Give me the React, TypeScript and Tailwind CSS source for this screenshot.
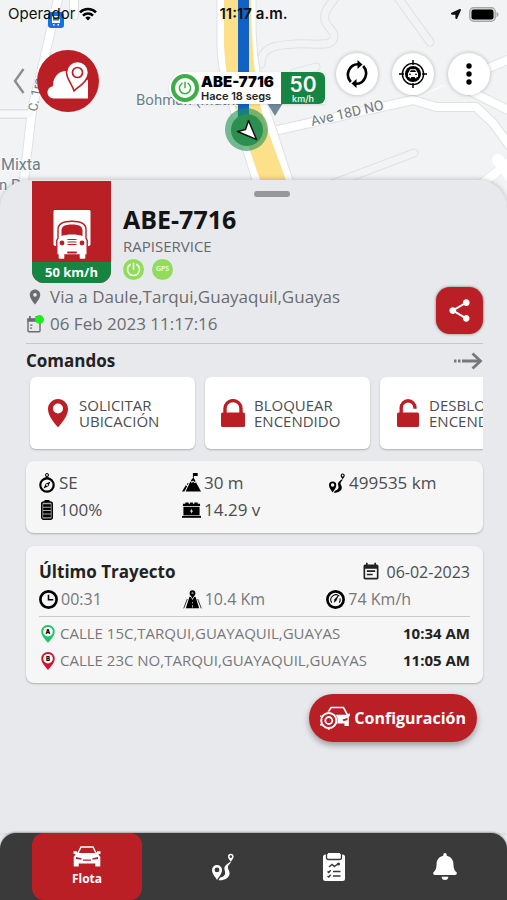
import React, { useState } from 'react';
import { FaBell, FaLocationArrow } from 'react-icons/fa';
import { MdEventNote, MdLocationOn, MdShare } from 'react-icons/md';

type IconProps = { className?: string };

const BackIcon = ({ className }: IconProps) => (
  <svg viewBox="0 0 12 26" className={className} fill="none" stroke="currentColor" strokeWidth="2.4">
    <path d="M10.5 1 2 13l8.500 12" />
  </svg>
);

const WifiIcon = ({ className }: IconProps) => (
  <svg viewBox="0 0 18 14" className={className} fill="none" stroke="currentColor" strokeWidth="2.500">
    <path d="M1 5.300a11.500 11.500 0 0 1 16 0" />
    <path d="M4 8.600a7 7 0 0 1 10 0" />
    <path d="M9 13.500 6.300 10.800a3.900 3.900 0 0 1 5.400 0z" fill="currentColor" stroke="none" />
  </svg>
);

const BatteryIcon = ({ className }: IconProps) => (
  <svg viewBox="0 0 30 15" className={className}>
    <rect x="0.700" y="0.700" width="25.600" height="13.600" rx="4" fill="#d8dad6" stroke="#a5a7a3" strokeWidth="1.200" />
    <rect x="2.500" y="2.500" width="22" height="10" rx="2.200" fill="#000" />
    <path d="M27.500 5c1.400.5 2 1.400 2 2.500s-.6 2-2 2.500z" fill="#a5a7a3" />
  </svg>
);

const LogoIcon = ({ className }: IconProps) => (
  <svg viewBox="0 0 62 62" className={className}>
    <circle cx="31" cy="31" r="31" fill="#bb1f26" />
    <path
      d="M17 48.500c-4 0-6.500-2.800-6.500-6 0-3.300 2.400-5.800 5.500-6.200-.4-7.800 4.500-14.800 12-15.300 3 0 4.500.5 6 1.500L51 30v18.500z"
      fill="#fff"
    />
    <path
      d="M40.500 11.500c-6.300 0-11 4.800-11 10.700 0 6.800 5.500 11.500 7.500 18.600 5.300-5 14.500-9.600 14.500-18.600 0-6-4.800-10.700-11-10.700z"
      fill="#fff"
      stroke="#bb1f26"
      strokeWidth="1.600"
    />
    <circle cx="40.500" cy="22.500" r="5" fill="none" stroke="#bb1f26" strokeWidth="1.700" />
  </svg>
);

const RefreshIcon = ({ className }: IconProps) => (
  <svg viewBox="0 0 24 30" className={className} fill="none" stroke="#000" strokeWidth="2.600">
    <path d="M5.800 23A10 10.500 0 0 1 13 5.200" />
    <path d="M18.200 7A10 10.500 0 0 1 11 24.800" />
    <path d="M12.500 1 17.500 5.600 12.500 10z" fill="#000" stroke="none" />
    <path d="M11.500 29 6.500 24.400 11.500 20z" fill="#000" stroke="none" />
  </svg>
);

const TargetIcon = ({ className }: IconProps) => (
  <svg viewBox="0 0 28 28" className={className}>
    <g fill="none" stroke="#000">
      <circle cx="14" cy="14" r="10.600" strokeWidth="1.400" />
      <path d="M14 0v5M14 23v5M0 14h5M23 14h5" strokeWidth="1.500" />
    </g>
    <circle cx="14" cy="14" r="8" fill="#000" />
    <path d="m9.800 12.300 1.300-3h5.800l1.300 3 .8.700v4h-1.500v1.300h-1.600V17h-3.800v1.300h-1.600V17H9v-4z" fill="#fff" />
    <path d="m11 12 .8-1.700h4.400L17 12zM10 13.700h2v1.100h-2zM16 13.700h2v1.100h-2z" fill="#000" />
  </svg>
);

const DotsIcon = ({ className }: IconProps) => (
  <svg viewBox="0 0 6 24" className={className}>
    <circle cx="3" cy="4" r="2.700" />
    <circle cx="3" cy="12" r="2.700" />
    <circle cx="3" cy="20" r="2.700" />
  </svg>
);

const PowerIcon = ({ className }: IconProps) => (
  <svg viewBox="0 0 14 14" className={className} fill="none" stroke="currentColor" strokeWidth="1.500" strokeLinecap="round">
    <path d="M4 2.300a5.600 5.600 0 1 0 6 0M7 1.200v5.600" />
  </svg>
);

const TruckIcon = ({ className }: IconProps) => (
  <svg viewBox="0 0 40 50" className={className}>
    <path d="M3 0h34c1 0 1.500.6 1.500 1.500V34c0 1-.6 1.800-1.600 2H3.100c-1-.2-1.600-1-1.600-2V1.500C1.500.6 2 0 3 0z" fill="#fff" />
    <path
      d="M7.500 49.500c-1 0-1.500-.6-1.500-1.500v-3H4.800V30.500L6 28V19.500C6 13.500 10.500 11.300 20 11.300s14 2.200 14 8.200V28l1.200 2.500V45H34v3c0 1-.5 1.500-1.500 1.500h-4c-1 0-1.500-.6-1.500-1.500v-3H13v3c0 1-.5 1.500-1.500 1.500z"
      fill="#fff"
      stroke="#bb1f26"
      strokeWidth="1.400"
    />
    <path d="M9.500 26v-5.500c0-4 3-6 10.500-6s10.500 2 10.500 6V26c-3-1-6-1.500-10.500-1.500S12.500 25 9.500 26z" fill="#bb1f26" />
    <circle cx="10" cy="33" r="2.400" fill="#bb1f26" />
    <circle cx="30" cy="33" r="2.400" fill="#bb1f26" />
    <path d="M15.500 29.500h9M15.500 32h9M15.500 34.500h9" stroke="#bb1f26" strokeWidth="1" />
    <rect x="15" y="41.500" width="10" height="2" rx="1" fill="#bb1f26" />
  </svg>
);

const CalendarDotIcon = ({ className }: IconProps) => (
  <svg viewBox="0 0 18 18" className={className}>
    <path d="M2 4.500h12v11.300c0 .6-.4 1-1 1H3c-.6 0-1-.4-1-1V4.500z" fill="none" stroke="#6b6c6e" strokeWidth="1.400" />
    <path d="M1.300 3.200H14v3.600H1.300zM3 1h1.800v3H3zM9.500 1h1.800v3H9.500z" fill="#6b6c6e" />
    <path d="M4 9.500h2.500v1.300H4zM4 12.500h2v1.200H4z" fill="#6b6c6e" />
    <circle cx="13.500" cy="4.500" r="4.400" fill="#19ee19" />
  </svg>
);

const DashedArrowIcon = ({ className }: IconProps) => (
  <svg viewBox="0 0 30 18" className={className} fill="none" stroke="currentColor" strokeWidth="2.800">
    <path d="M1 9h2.500M5 9h2.500M9 9h18" />
    <path d="m19.500 1.500 8 7.500-8 7.500" />
  </svg>
);

const PinIcon = ({ className }: IconProps) => (
  <svg viewBox="0 0 20 28" className={className} fill="currentColor">
    <path
      fillRule="evenodd"
      d="M10 0C4.500 0 0 4.500 0 10c0 7 6 13.500 9 17.300.6.800 1.400.8 2 0C14 23.500 20 17 20 10 20 4.500 15.500 0 10 0zm0 14.500a5 5 0 1 1 0-10 5 5 0 0 1 0 10z"
    />
  </svg>
);

const LockIcon = ({ className }: IconProps) => (
  <svg viewBox="0 0 24 28" className={className}>
    <path d="M4 15V9.500a8 7.900 0 0 1 16 0V15" fill="none" stroke="currentColor" strokeWidth="3.400" />
    <rect x="0" y="13.500" width="24" height="14.500" rx="1.500" fill="currentColor" />
  </svg>
);

const UnlockIcon = ({ className }: IconProps) => (
  <svg viewBox="0 0 22 28" className={className}>
    <path d="M4.200 15V9a6.900 7.300 0 0 1 13.800 0v.8" fill="none" stroke="currentColor" strokeWidth="3.400" />
    <rect x="0" y="13.500" width="22" height="14.500" rx="1.500" fill="currentColor" />
  </svg>
);

const CompassIcon = ({ className }: IconProps) => (
  <svg viewBox="0 0 16 20" className={className}>
    <circle cx="8" cy="12" r="6.700" fill="none" stroke="#000" strokeWidth="2.200" />
    <circle cx="8" cy="2" r="1.500" fill="none" stroke="#000" />
    <path d="M6.500 3.500h3V5h-3z" />
    <path d="m11.500 8.500-2.200 4.800-4.800 2.200 2.200-4.800z" />
    <circle cx="8" cy="12" r="1" fill="#fff" />
  </svg>
);

const BatteryFullIcon = ({ className }: IconProps) => (
  <svg viewBox="0 0 14 20" className={className}>
    <path d="M4.500 0h5v2h-5z" />
    <rect x="1.700" y="2" width="10.600" height="17.300" rx="2" fill="#aaa" stroke="#000" strokeWidth="1.400" />
    <path d="M3.200 4.300h7.600v2.400H3.200zM3.200 7.700h7.600v2.400H3.200zM3.200 11.100h7.600v2.400H3.200zM3.200 14.500h7.600v2.700H3.200z" />
  </svg>
);

const MountainIcon = ({ className }: IconProps) => (
  <svg viewBox="0 0 20 20" className={className}>
    <path d="M0 19.500 4 13l1.500 1L2.500 19.500z" />
    <path d="m3.800 19.500 5-10.500 1.500 1.600 1.400-1.400 1.800 1.600 1.200-1 5.300 9.700z" />
    <path d="m9.300 8 2.700-3.200 2.300 3.700-1 .9-1.700-1.600-1.200 1.400z" />
    <path d="M11.500 5V0h5v3.200h-4V5z" />
    <path d="m5.500 12.500 1-2" stroke="#000" />
  </svg>
);

const CarBatteryIcon = ({ className }: IconProps) => (
  <svg viewBox="0 0 20 18" className={className}>
    <path d="M1 2.500h2.500V1h3.500v1.500h1.500V1h3v1.500H13V1h3.500v1.500H19v2.300H1z" />
    <path d="M1.500 5.600h17v9h-17z" />
    <path d="M0 15.200h20v2H0z" />
    <path d="M10.600 7.500 8.300 10.500h1.500L9.300 13l2.400-3.200h-1.500z" fill="#fff" />
  </svg>
);

// Big pin, winding road, small pin
const RouteIcon = ({ className }: IconProps) => (
  <svg viewBox="0 0 22 27" className={className} fill="currentColor">
    <path
      fillRule="evenodd"
      d="M5 11.500a5 5 0 0 0-5 5c0 3.600 3.200 6.800 5 10 1.800-3.200 5-6.400 5-10a5 5 0 0 0-5-5zm0 7.300a2.400 2.400 0 1 1 0-4.800 2.400 2.400 0 0 1 0 4.800z"
    />
    <path d="M6.500 26.800c6 .4 10.900-2.400 11.100-6.800.1-3-2.100-4.200-1.700-6.500.3-1.700 1.500-2.700 3-4.500l-1-.5c-2.500 2-5.700 3.800-5.500 6.500.2 2.400 1 3.200.6 5.200-.4 2-1.900 3.400-4.800 3.800z" />
    <path
      fillRule="evenodd"
      d="M18.800.3A2.800 2.800 0 0 0 16 3.100c0 2 1.800 3.300 2.800 5.300 1-2 2.800-3.300 2.800-5.300A2.800 2.800 0 0 0 18.800.3zm0 4.100a1.300 1.300 0 1 1 0-2.600 1.300 1.300 0 0 1 0 2.600z"
    />
  </svg>
);

const ClockIcon = ({ className }: IconProps) => (
  <svg viewBox="0 0 18 18" className={className} fill="none" stroke="#000">
    <circle cx="9" cy="9" r="7.700" strokeWidth="2.500" />
    <path d="M9 4.500V9.300h4.500" strokeWidth="1.500" />
  </svg>
);

const RoadIcon = ({ className }: IconProps) => (
  <svg viewBox="0 0 20 20" className={className}>
    <circle cx="10" cy="3.300" r="3" />
    <circle cx="10" cy="3.300" r="1.100" fill="#888" />
    <path d="M8 5.500h4l-2 3.800z" />
    <path d="m6.800 7 1.500.3L10 10.500l1.700-3.200 1.500-.3L17 19.300H3z" />
    <path d="M4.500 9.500.8 19.300M15.500 9.500l3.700 9.800" stroke="#333" strokeWidth="1" />
    <path d="M10 12.500v1.500M10 16v2.500" stroke="#bbb" strokeWidth="0.900" />
  </svg>
);

const GaugeIcon = ({ className }: IconProps) => (
  <svg viewBox="0 0 18 18" className={className} fill="none" stroke="#000">
    <circle cx="9" cy="9" r="7.700" strokeWidth="2.500" />
    <path d="M5.500 12a4.700 4.700 0 0 1 7-6.200M13.300 8a4.700 4.700 0 0 1-.8 4" strokeWidth="1" />
    <path d="m7.800 11.700.5-3L11.500 5.500 9.800 9.800z" fill="#000" strokeWidth="0.500" />
  </svg>
);

const LetterPinIcon = ({ letter, className }: IconProps & { letter: string }) => (
  <svg viewBox="0 0 14 18" className={className}>
    <path d="M7 0C3 0 .3 3 .3 6.700.3 11 4.500 14.500 7 18c2.500-3.500 6.700-7 6.700-11.300C13.700 3 11 0 7 0z" fill="currentColor" />
    <circle cx="7" cy="6.700" r="4.800" fill="#fff" />
    <text x="7" y="8.800" fontSize="6" fontWeight="900" textAnchor="middle" fill="#000" fontFamily="Inter, sans-serif">
      {letter}
    </text>
  </svg>
);

const ConfigCarIcon = ({ className }: IconProps) => (
  <svg viewBox="0 0 30 24" className={className}>
    <path d="M7.500 7.500 11 1.500h12.500l4 7.500" fill="none" stroke="#fff" strokeWidth="1.600" />
    <path d="M14 8.800h13.500L29.800 7v3l-1 1v9h-4.300v-2.500H14z" fill="#fff" />
    <path d="m22.500 13.500 5-1.500v2l-4 1.200z" fill="#bb1f26" />
    <circle cx="8.800" cy="14.500" r="9" fill="#bb1f26" />
    <circle cx="8.800" cy="14.500" r="7.600" fill="none" stroke="#fff" strokeWidth="2" />
    <circle cx="8.800" cy="14.500" r="3.500" fill="none" stroke="#fff" strokeWidth="1.800" />
    <path d="M8.800 22v1.800M1.300 18.500l-1 .8M1 10.500l-.8-.6" stroke="#fff" strokeWidth="2" />
  </svg>
);

const CarIcon = ({ className }: IconProps) => (
  <svg viewBox="0 0 28 21" className={className}>
    <path d="M4.800 7.500 8 1h12l3.200 6.500" fill="none" stroke="#fff" strokeWidth="1.400" />
    <path d="M.5 5.300h3.300l.8 1.700h18.800l.8-1.700h3.300v2.500l-2.200.5 2 2.700v9.500h-5v-3H5.700v3h-5V11l2-2.700-2.200-.5z" fill="#fff" />
    <path d="m3 11 5.500 1.300v1.500L3 13zM25 11l-5.500 1.300v1.500L25 13zM10 13.500h8v1.200h-8z" fill="#bb1f26" />
  </svg>
);

const ReportIcon = ({ className }: IconProps) => (
  <svg viewBox="0 0 22 28" className={className}>
    <rect x="0" y="1.500" width="22" height="26.500" rx="2.500" fill="#fff" />
    <path d="M3.500 1v3.500c0 1.500.8 2 2 2h11c1.200 0 2-.5 2-2V1" fill="#fff" stroke="#3a3a3a" strokeWidth="1.300" />
    <path d="M5 0h12v2.500H5z" fill="#fff" />
    <g fill="none" stroke="#3a3a3a" strokeWidth="1.400">
      <path d="m6 14 3-2.500 2.500 2 4-3.300" />
      <path d="m4.500 18.500 1.200 1 2-2.200M10 18.500h7.500M4.500 23l1.200 1 2-2.200M10 23h7.500" />
    </g>
    <circle cx="15.500" cy="11" r="1.600" fill="#3a3a3a" />
  </svg>
);

const MapBackdrop = () => (
  <svg
    viewBox="0 0 507 220"
    preserveAspectRatio="xMidYMin slice"
    className="absolute inset-x-0 top-0 h-[220px] w-full font-['Roboto',sans-serif]"
  >
    <rect width="507" height="220" fill="#f1f3f4" />
    <g fill="none" stroke="#dfe2e5" strokeLinejoin="round" strokeLinecap="round">
      <g strokeWidth="10">
        <path d="M59-5 44 60 32 110 24 180v45M74-5v20M-5 114h35" />
        <path d="M278 130 413 100l23 7h40l17 16 19 26M484 70l28-12M468 90l44 22" />
        <path d="M512 160 474 190" />
      </g>
      <g strokeWidth="9">
        <path d="M396-5 430 42M337-5c-6 10-14 15-12 25 2 8 12 12 8 20-4 7-22 3-38 4-22 1-34 4-34 20M316 67l-22 6" />
        <path d="m414 153-90 34-40 20" />
      </g>
    </g>
    <g fill="none" stroke="#fff" strokeLinejoin="round" strokeLinecap="round">
      <path d="M59-5 44 60 32 110 24 180v45M74-5v20" strokeWidth="8" />
      <path d="M-5 114h35" strokeWidth="7" stroke="#f8f9fa" />
      <path d="M278 130 413 100l23 7h40l17 16 19 26M484 70l28-12M468 90l44 22" strokeWidth="8" />
      <path d="M512 160 474 190" strokeWidth="9" />
      <path d="m498 160 14 18" strokeWidth="12" />
      <path d="M413 100 444 85" strokeWidth="1" />
      <g strokeWidth="7" stroke="#f1f3f4">
        <path d="M396-5 430 42M337-5c-6 10-14 15-12 25 2 8 12 12 8 20-4 7-22 3-38 4-22 1-34 4-34 20M316 67l-22 6" />
        <path d="m414 153-90 34-40 20" />
      </g>
    </g>
    <path d="M217-2v52q3 36 13 60l22 70 14 42h44l-17-42-18-55q-18-45-19-95V-2z" fill="#fff" stroke="#dfe2e5" />
    <path d="M224 0v45q2 40 12 65l24 70 14 42h27l-15-42-22-60Q252 80 251 0z" fill="#fde08a" />
    <rect x="48" y="12" width="16" height="16" rx="3" fill="#1a6fe0" />
    <path d="M52 16h8v7h-8zM53 24h1.500v1.500H53zM57.500 24H59v1.500h-1.500z" fill="#fff" />
    <path d="M53 17.500h6v3h-6z" fill="#1a6fe0" />
    <path d="M267 103h16l-8 13z" fill="#74879b" />
    <g fill="#6c7f8c" stroke="#f8f9fa" strokeWidth="2" paintOrder="stroke" fontSize="15">
      <text x="136" y="105">Bohman (Matriz)</text>
      <text x="1" y="170" fontSize="16">Mixta</text>
      <text x="-9" y="190">en P</text>
      <text x="312" y="126" fill="#75797c" fontSize="14" transform="rotate(-13 312 126)">Ave 18D NO</text>
      <text x="37" y="112" fill="#75797c" fontSize="13" transform="rotate(-80 37 112)">C. 1ra</text>
    </g>
    <path d="M243.500 0v122" stroke="#1062c4" strokeWidth="11" />
  </svg>
);

const VehicleMarker = () => (
  <div className="absolute left-[169px] top-[72px] w-[156px] font-['Inter',sans-serif]">
    <div className="absolute left-14 top-9 flex size-[43px] items-center justify-center rounded-full bg-[#1f9150]/60">
      <div className="flex size-8 items-center justify-center rounded-full bg-[#2b8f50]">
        <svg viewBox="0 0 24 24" className="size-6">
          <path d="M13.500 2.500 21.500 21.500 2.500 13.500 10.500 11.500z" fill="#fff" stroke="#111" strokeWidth="1.500" strokeLinejoin="round" />
        </svg>
      </div>
    </div>
    <div className="relative flex h-8 rounded-l-full rounded-r-md bg-white shadow-sm">
      <div className="m-[2px] flex size-7 shrink-0 items-center justify-center rounded-full border-4 border-[#3eae49] text-[#3eae49]">
        <PowerIcon className="size-[14px]" />
      </div>
      <div className="w-20 whitespace-nowrap pt-[2px]">
        <div className="text-[15px] font-black leading-[15px] text-black">ABE-7716</div>
        <div className="text-[11px] font-semibold leading-[14px] text-[#222]">Hace 18 segs</div>
      </div>
      <div className="w-11 rounded-r-md bg-[#158541] pt-1 text-center text-white">
        <div className="text-[21px] font-semibold leading-[18px]">50</div>
        <div className="text-[9px] font-medium leading-[9px]">km/h</div>
      </div>
    </div>
  </div>
);

const mapActions = [
  { label: 'Actualizar', icon: <RefreshIcon className="h-[30px] w-6" /> },
  { label: 'Centrar', icon: <TargetIcon className="size-7" /> },
  { label: 'Más opciones', icon: <DotsIcon className="h-6 w-[6px]" /> },
];

const commands = [
  { lines: ['SOLICITAR', 'UBICACIÓN'], icon: <PinIcon className="h-7 w-5" /> },
  { lines: ['BLOQUEAR', 'ENCENDIDO'], icon: <LockIcon className="h-7 w-6" /> },
  { lines: ['DESBLOQUEAR', 'ENCENDIDO'], icon: <UnlockIcon className="h-7 w-[22px]" /> },
];

const stats = [
  { value: 'SE', icon: <CompassIcon className="h-5 w-4" /> },
  { value: '30 m', icon: <MountainIcon className="size-[19px]" /> },
  { value: '499535 km', icon: <RouteIcon className="h-5 w-4" /> },
  { value: '100%', icon: <BatteryFullIcon className="h-5 w-4" /> },
  { value: '14.29 v', icon: <CarBatteryIcon className="h-[18px] w-[19px]" /> },
];

const tripStats = [
  { value: '00:31', icon: <ClockIcon className="size-[19px]" /> },
  { value: '10.4 Km', icon: <RoadIcon className="size-[19px]" /> },
  { value: '74 Km/h', icon: <GaugeIcon className="size-[19px]" /> },
];

const stops = [
  { letter: 'A', address: 'CALLE 15C,TARQUI,GUAYAQUIL,GUAYAS', time: '10:34 AM', color: 'text-[#1fc46b]' },
  { letter: 'B', address: 'CALLE 23C NO,TARQUI,GUAYAQUIL,GUAYAS', time: '11:05 AM', color: 'text-[#d5122f]' },
];

const tabs = [
  { id: 'recorridos', label: 'Recorridos', icon: <RouteIcon className="h-7 w-[22px]" /> },
  { id: 'reportes', label: 'Reportes', icon: <ReportIcon className="h-7 w-[22px]" /> },
  { id: 'alertas', label: 'Alertas', icon: <FaBell className="h-[27px] w-6" /> },
];

function App() {
  const [activeTab, setActiveTab] = useState('flota');

  return (
    <div className="relative flex min-h-screen flex-col overflow-hidden bg-[#e8e9ed] font-['Open_Sans',sans-serif]">
      <MapBackdrop />
      <VehicleMarker />

      {/* Status bar and map controls */}
      <header className="relative h-[180px]">
        <div className="grid h-7 grid-cols-3 items-center px-2 font-['Inter',sans-serif] text-[15px] text-[#111]">
          <div className="flex items-center gap-1">
            Operador
            <WifiIcon className="h-[14px] w-[18px] text-black" />
          </div>
          <div className="text-center font-semibold">11:17 a.m.</div>
          <div className="flex items-center justify-end gap-2">
            <FaLocationArrow className="size-[10px]" />
            <BatteryIcon className="h-[15px] w-[30px]" />
          </div>
        </div>
        <div className="flex items-start justify-between pl-[13px] pr-[17px] pt-[22px]">
          <div className="flex items-center gap-3">
            <button type="button" aria-label="Volver" className="text-[#8b8d8f]">
              <BackIcon className="h-[26px] w-3" />
            </button>
            <LogoIcon className="size-[62px]" />
          </div>
          <div className="flex gap-[14px] pt-[3px]">
            {mapActions.map((action) => (
              <button
                key={action.label}
                type="button"
                aria-label={action.label}
                className="flex size-[42px] items-center justify-center rounded-full bg-white shadow-[0_0_4px_rgba(0,0,0,0.25)]"
              >
                {action.icon}
              </button>
            ))}
          </div>
        </div>
      </header>

      {/* Vehicle sheet */}
      <main className="relative flex-1 rounded-t-[28px] bg-[#e8e9ed] pl-[26px] pr-6 pt-px shadow-[0_-1px_5px_rgba(0,0,0,0.2)]">
        <section className="flex gap-3 pl-[6px]">
          <div className="flex h-[102px] w-[79px] shrink-0 flex-col overflow-hidden rounded-b-xl bg-[#bb1f26]">
            <div className="flex flex-1 items-end justify-center pb-[2px]">
              <TruckIcon className="h-[50px] w-10" />
            </div>
            <div className="bg-[#158541] pb-px text-center text-[13px] font-bold leading-5 text-white">50 km/h</div>
          </div>
          <div className="flex-1 pt-[10px]">
            <div className="ml-[131px] h-[6px] w-9 rounded-full bg-[#97979a]" />
            <h1 className="mt-[5px] text-[25px] font-bold leading-[34px] text-[#141414]">ABE-7716</h1>
            <p className="text-[15px] leading-5 text-[#67686a]">RAPISERVICE</p>
            <div className="mt-[3px] flex gap-2">
              <span className="flex size-[21px] items-center justify-center rounded-full bg-[#92dc5c] text-[#f3ffe9]">
                <PowerIcon className="size-[15px]" />
              </span>
              <span className="flex size-[21px] items-center justify-center rounded-full bg-[#92dc5c] text-[7px] font-semibold text-[#f3ffe9]">
                GPS
              </span>
            </div>
          </div>
        </section>

        <section className="flex items-center justify-between border-b border-[#c6c7ca] pb-[6px]">
          <div className="text-[17px] leading-[27px] text-[#6b6c6e]">
            <div className="flex items-center gap-[6px]">
              <MdLocationOn className="size-[18px]" />
              Via a Daule,Tarqui,Guayaquil,Guayas
            </div>
            <div className="flex items-center gap-[6px]">
              <CalendarDotIcon className="size-[18px]" />
              06 Feb 2023 11:17:16
            </div>
          </div>
          <button
            type="button"
            aria-label="Compartir"
            className="flex size-[47px] items-center justify-center rounded-[14px] bg-[#bb1f26] text-white shadow-[0_0_3px_rgba(0,0,0,0.5)]"
          >
            <MdShare className="size-[27px]" />
          </button>
        </section>

        {/* Commands */}
        <section>
          <div className="flex h-[33px] items-center justify-between">
            <h2 className="text-[17px] font-bold text-[#222]">Comandos</h2>
            <DashedArrowIcon className="h-[18px] w-[30px] text-[#77787a]" />
          </div>
          <div className="flex gap-[10px] overflow-hidden pb-3 pl-1">
            {commands.map((command) => (
              <button
                key={command.lines[0]}
                type="button"
                className="flex h-[72px] w-[165px] shrink-0 items-center rounded-md bg-white text-left text-[15px] leading-4 text-[#4c4d4f] shadow-[0_1px_2px_rgba(0,0,0,0.25)]"
              >
                <span className="flex w-[49px] justify-center pl-[6px] text-[#bb1f26]">{command.icon}</span>
                <span>
                  {command.lines[0]}
                  <br />
                  {command.lines[1]}
                </span>
              </button>
            ))}
          </div>
        </section>

        {/* Telemetry */}
        <section className="grid grid-cols-3 rounded-lg bg-[#f6f6f6] px-[11px] pb-[10px] pt-2 text-[17px] leading-[27px] text-[#4c4d4f] shadow-[0_1px_2px_rgba(0,0,0,0.25)]">
          {stats.map((stat) => (
            <div key={stat.value} className="flex items-center gap-[3px]">
              <span className="flex w-[19px] justify-center text-black">{stat.icon}</span>
              {stat.value}
            </div>
          ))}
        </section>

        {/* Last trip */}
        <section className="mt-[13px] rounded-lg bg-[#f6f6f6] px-[13px] pb-[9px] pt-3 shadow-[0_1px_2px_rgba(0,0,0,0.25)]">
          <div className="flex items-center justify-between leading-7">
            <h2 className="text-[17px] font-bold text-[#222]">Último Trayecto</h2>
            <div className="flex items-center gap-[6px] text-[16px] text-[#4c4d4f]">
              <MdEventNote className="size-5 text-[#222]" />
              06-02-2023
            </div>
          </div>
          <div className="grid grid-cols-3 border-b border-[#c9c9cb] pb-1 text-[16px] leading-[26px] text-[#77787a]">
            {tripStats.map((stat) => (
              <div key={stat.value} className="flex items-center gap-[3px]">
                {stat.icon}
                {stat.value}
              </div>
            ))}
          </div>
          <div className="pt-[3px] text-[15px] leading-[27px]">
            {stops.map((stop) => (
              <div key={stop.letter} className="flex items-center">
                <LetterPinIcon letter={stop.letter} className={`ml-[2px] mr-[5px] h-[18px] w-[14px] ${stop.color}`} />
                <span className="flex-1 text-[#77787a]">{stop.address}</span>
                <span className="font-bold text-[#222]">{stop.time}</span>
              </div>
            ))}
          </div>
        </section>

        <div className="flex justify-end pr-[6px] pt-[11px]">
          <button
            type="button"
            className="flex h-12 items-center gap-1 rounded-full bg-[#bb1f26] px-[11px] text-[16px] font-bold text-white shadow-[0_3px_6px_rgba(0,0,0,0.35)]"
          >
            <ConfigCarIcon className="h-6 w-[30px]" />
            Configuración
          </button>
        </div>
      </main>

      <nav className="relative flex h-[67px] rounded-t-2xl bg-[#3a3a3a] pl-8 pr-[7px] text-white shadow-[0_-1px_2px_rgba(0,0,0,0.3)]">
        <button
          type="button"
          onClick={() => setActiveTab('flota')}
          className={`mr-[25px] flex w-[110px] flex-col items-center justify-center gap-1 rounded-xl ${activeTab === 'flota' ? 'bg-[#bb1f26]' : ''}`}
        >
          <CarIcon className="h-[21px] w-7" />
          <span className="text-[12px] font-bold leading-4">Flota</span>
        </button>
        {tabs.map((tab) => (
          <button
            key={tab.id}
            type="button"
            aria-label={tab.label}
            onClick={() => setActiveTab(tab.id)}
            className={`flex flex-1 items-center justify-center rounded-xl ${activeTab === tab.id ? 'bg-[#bb1f26]' : ''}`}
          >
            {tab.icon}
          </button>
        ))}
      </nav>
    </div>
  );
}

export default App;
